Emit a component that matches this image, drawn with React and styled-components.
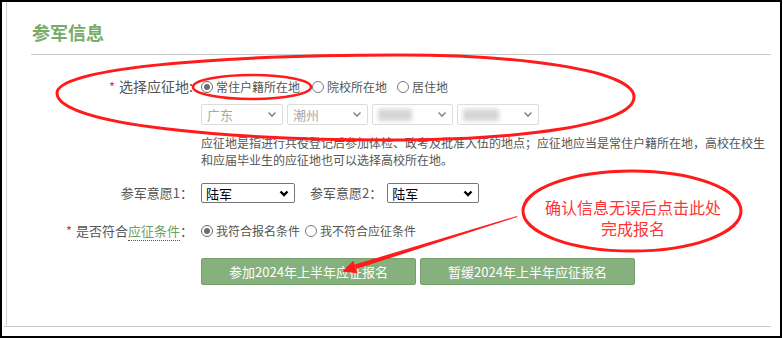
import styled, { createGlobalStyle } from 'styled-components';

const GlobalStyle = createGlobalStyle`
  body {
    margin: 0;
    background: #fff;
    font-family: "Noto Sans CJK SC", "Noto Sans", sans-serif;
  }
`;

const Frame = styled.div`
  position: relative;
  width: 782px;
  height: 338px;
  box-sizing: border-box;
  border: 2px solid #000;
  background: #fff;
  overflow: hidden;
`;

const Panel = styled.div`
  margin-left: 2px;
  width: 767px;
  height: 325px;
  box-sizing: border-box;
  border-bottom: 1px solid #cccccc;
`;

const Inner = styled.div`
  margin-left: 2px;
  height: 100%;
  border-left: 1px solid #d2d2d2;
`;

const Title = styled.h2`
  margin: 0 0 0 24px;
  padding: 18px 0 10px 1px;
  font-size: 18px;
  line-height: 24px;
  font-weight: bold;
  color: #78ab68;
  border-bottom: 1px solid #cccccc;
`;

const Row = styled.div`
  display: grid;
  grid-template-columns: 186px 1fr;
  column-gap: 8px;
  align-items: center;
  margin-top: ${(p) => p.$mt}px;
`;

const Label = styled.div`
  text-align: right;
  font-size: ${(p) => p.$size || 13}px;
  line-height: 20px;
  color: #555;
  white-space: nowrap;
`;

const Req = styled.span`
  color: #e8342a;
  font-size: 13px;
  margin-right: 4px;
`;

const Term = styled.span`
  color: #6e9f5e;
  border-bottom: 1px dotted #555;
`;

const Controls = styled.div`
  grid-column: 2;
  display: flex;
  align-items: center;
  gap: ${(p) => p.$gap || 0}px;
`;

const Option = styled.label`
  display: inline-flex;
  align-items: center;
  gap: 3px;
  margin-right: ${(p) => p.$space}px;
  font-size: 12px;
  line-height: 20px;
  color: #555;
`;

const Radio = styled.span`
  width: 12px;
  height: 12px;
  box-sizing: border-box;
  border-radius: 50%;
  border: 1px solid ${(p) => (p.$checked ? '#6c6c6c' : '#7a7a7a')};
  display: grid;
  place-items: center;
  &::after {
    content: '';
    width: 6px;
    height: 6px;
    border-radius: 50%;
    background: ${(p) => (p.$checked ? '#6c6c6c' : 'transparent')};
  }
`;

const RegionSelect = styled.div`
  width: ${(p) => p.$w}px;
  height: 21px;
  box-sizing: border-box;
  border: 1px solid #dcdcdc;
  border-radius: 2px;
  display: flex;
  align-items: center;
  justify-content: space-between;
  padding: 0 5px;
  font-size: 13px;
  color: #a8a8a8;
`;

const Smudge = styled.span`
  width: ${(p) => p.$w}px;
  height: 12px;
  background: #d6d6d6;
  filter: blur(2px);
`;

const FormSelect = styled.div`
  width: ${(p) => p.$w}px;
  height: 20px;
  box-sizing: border-box;
  border: 1px solid #767676;
  border-radius: 2px;
  display: flex;
  align-items: center;
  justify-content: space-between;
  padding: 0 5px 0 4px;
  font-size: 13px;
  color: #000;
`;

const InlineLabel = styled.span`
  font-size: 13px;
  line-height: 20px;
  color: #555;
  margin: 0 5px 0 15px;
`;

const Desc = styled.p`
  grid-column: 2;
  margin: 0;
  width: 568px;
  font-size: 12px;
  line-height: 17px;
  color: #555;
`;

const Button = styled.button`
  width: 215px;
  height: 27px;
  box-sizing: border-box;
  border: 1px solid #74a06a;
  border-radius: 2px;
  background: #86b17e;
  color: #fff;
  font-family: inherit;
  font-size: 13px;
  padding: 0;
`;

const Overlay = styled.svg`
  position: absolute;
  left: -2px;
  top: -2px;
  pointer-events: none;
`;

const Callout = styled.div`
  position: absolute;
  left: 531px;
  top: 195px;
  width: 200px;
  text-align: center;
  font-size: 16px;
  line-height: 21px;
  color: #ff3535;
`;

function Chevron({ bold }) {
  return (
    <svg width="10" height="7" viewBox="0 0 10 7">
      <path
        d="M1.5 1.5 L5 5 L8.5 1.5"
        fill="none"
        stroke={bold ? '#000' : '#8a8a8a'}
        strokeWidth={bold ? 2.4 : 1.6}
      />
    </svg>
  );
}

const red = '#ff1b1b';

export default function App() {
  return (
    <>
      <GlobalStyle />
      <Frame>
        <Panel>
          <Inner>
            <Title>参军信息</Title>

            <Row $mt={21}>
              <Label $size={14}>
                <Req>*</Req>选择应征地:
              </Label>
              <Controls>
                <Option $space={12}>
                  <Radio $checked />
                  常住户籍所在地
                </Option>
                <Option $space={10}>
                  <Radio />
                  院校所在地
                </Option>
                <Option $space={0}>
                  <Radio />
                  居住地
                </Option>
              </Controls>
            </Row>

            <Row $mt={7}>
              <Controls $gap={4}>
                <RegionSelect $w={82}>
                  广东
                  <Chevron />
                </RegionSelect>
                <RegionSelect $w={81}>
                  潮州
                  <Chevron />
                </RegionSelect>
                <RegionSelect $w={81}>
                  <Smudge $w={34} />
                  <Chevron />
                </RegionSelect>
                <RegionSelect $w={82}>
                  <Smudge $w={36} />
                  <Chevron />
                </RegionSelect>
              </Controls>
            </Row>

            <Row $mt={9}>
              <Desc>
                应征地是指进行兵役登记后参加体检、政考及批准入伍的地点；应征地应当是常住户籍所在地，高校在校生和应届毕业生的应征地也可以选择高校所在地。
              </Desc>
            </Row>

            <Row $mt={15}>
              <Label>参军意愿1：</Label>
              <Controls>
                <FormSelect $w={94}>
                  陆军
                  <Chevron bold />
                </FormSelect>
                <InlineLabel>参军意愿2：</InlineLabel>
                <FormSelect $w={92}>
                  陆军
                  <Chevron bold />
                </FormSelect>
              </Controls>
            </Row>

            <Row $mt={18}>
              <Label>
                <Req>*</Req>是否符合<Term>应征条件</Term>：
              </Label>
              <Controls>
                <Option $space={5}>
                  <Radio $checked />
                  我符合报名条件
                </Option>
                <Option $space={0}>
                  <Radio />
                  我不符合应征条件
                </Option>
              </Controls>
            </Row>

            <Row $mt={17}>
              <Controls $gap={4}>
                <Button>参加2024年上半年应征报名</Button>
                <Button>暂缓2024年上半年应征报名</Button>
              </Controls>
            </Row>
          </Inner>
        </Panel>

        <Overlay width="783" height="338" viewBox="0 0 783 338">
          <path
            d="M57 93 C57 70 200 55 400 55 C520 55 634 70 634 97 C634 125 520 140 390 140 C230 140 57 125 57 93 Z"
            fill="none"
            stroke={red}
            strokeWidth="3"
          />
          <ellipse cx="252" cy="87" rx="59" ry="12" fill="none" stroke={red} strokeWidth="2.6" />
          <ellipse cx="632" cy="211" rx="109" ry="40" fill="none" stroke={red} strokeWidth="3" />
          <polygon points="517,216 517.3,217 356.2,269 354.8,264.5" fill={red} />
          <polygon points="342,271.5 353.4,260.8 357.4,273.3" fill={red} />
        </Overlay>
        <Callout>
          确认信息无误后点击此处
          <br />
          完成报名
        </Callout>
      </Frame>
    </>
  );
}
